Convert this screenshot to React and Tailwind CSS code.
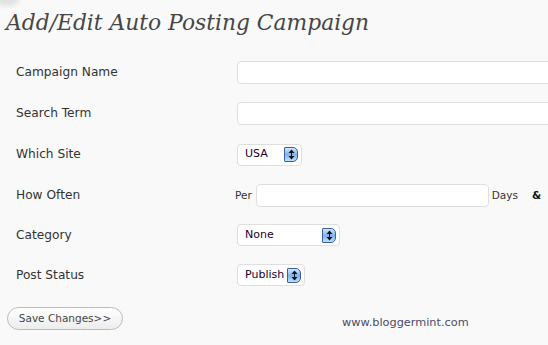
import React from 'react';

// small blue spinner like the old OS X select arrows
const Spinner = () => (
  <span className="ml-auto mr-[3px] flex h-[15px] w-[14px] shrink-0 items-center justify-center rounded-r-[5px] rounded-l-[1px] border border-[#3a5f9c] bg-gradient-to-b from-[#d6e8fb] via-[#7eb2ec] to-[#bfe0fb]">
    <svg width="7" height="11" viewBox="0 0 7 11">
      <path d="M3.5 0.5 L6.5 4 L0.5 4 Z" fill="#111" />
      <path d="M3.5 10.5 L6.5 7 L0.5 7 Z" fill="#111" />
      <rect x="3" y="4" width="1" height="3" fill="#111" />
    </svg>
  </span>
);

const Select = ({ value, width }) => (
  <div className={`flex h-[22px] shrink-0 ${width} items-center rounded-[4px] border border-[#dfdfdf] bg-white pl-[7px] text-[11px] text-[#1a0030]`}>
    <span>{value}</span>
    <Spinner />
  </div>
);

const TextInput = ({ className = '' }) => (
  <div className={`h-[23px] shrink-0 rounded-[4px] border border-[#dfdfdf] bg-white ${className}`} />
);

const rows = [
  { label: 'Campaign Name', h: 'h-[41px]', field: <TextInput className="w-[330px]" /> },
  { label: 'Search Term', h: 'h-[41px]', field: <TextInput className="w-[330px]" /> },
  { label: 'Which Site', h: 'h-[41px]', field: <Select value="USA" width="w-[65px]" /> },
  {
    label: 'How Often',
    h: 'h-[40px]',
    field: (
      <div className="-ml-[2px] flex shrink-0 items-center text-[10.5px] text-[#333]">
        <span className="mr-[4px] mt-[2px]">Per</span>
        <TextInput className="w-[233px]" />
        <span className="ml-[3px] mt-[2px]">Days</span>
        <span className="ml-[14px] mt-[2px] font-bold text-[#111]">&amp;</span>
      </div>
    ),
  },
  { label: 'Category', h: 'h-[40px]', field: <Select value="None" width="w-[103px]" /> },
  { label: 'Post Status', h: 'h-[40px]', field: <Select value="Publish" width="w-[68px]" /> },
];

export default function App() {
  return (
    <div
      className="relative h-[345px] w-[548px] overflow-hidden bg-[#f9f9f9]"
      style={{ fontFamily: '"DejaVu Sans", Verdana, sans-serif' }}
    >
      {/* faded icon peeking at top-left */}
      <div className="absolute -left-[6px] -top-[14px] h-[20px] w-[26px] rounded-full bg-[#e2e2e2] blur-[2px]" />

      <div className="h-[52px] pl-[6px] pt-[8px]">
        <h1
          className="text-[21.8px] italic leading-[30px] text-[#464646]"
          style={{ fontFamily: '"DejaVu Serif", Georgia, serif' }}
        >
          Add/Edit Auto Posting Campaign
        </h1>
      </div>

      <div className="flex flex-col">
        {rows.map((r) => (
          <div key={r.label} className={`flex items-center ${r.h}`}>
            <div className="w-[237px] shrink-0 pl-[16px] text-[12.2px] text-[#333]">{r.label}</div>
            {r.field}
          </div>
        ))}
      </div>

      <div className="mt-[10px] flex items-center">
        <button className="ml-[7px] h-[23px] w-[116px] shrink-0 rounded-full border border-[#bbb] bg-gradient-to-b from-white to-[#ededed] text-[10.5px] text-[#464646]">
          Save Changes&gt;&gt;
        </button>
        <span className="ml-[219px] mt-[10px] shrink-0 text-[11.3px] text-[#4a4a6a]">www.bloggermint.com</span>
      </div>
    </div>
  );
}
